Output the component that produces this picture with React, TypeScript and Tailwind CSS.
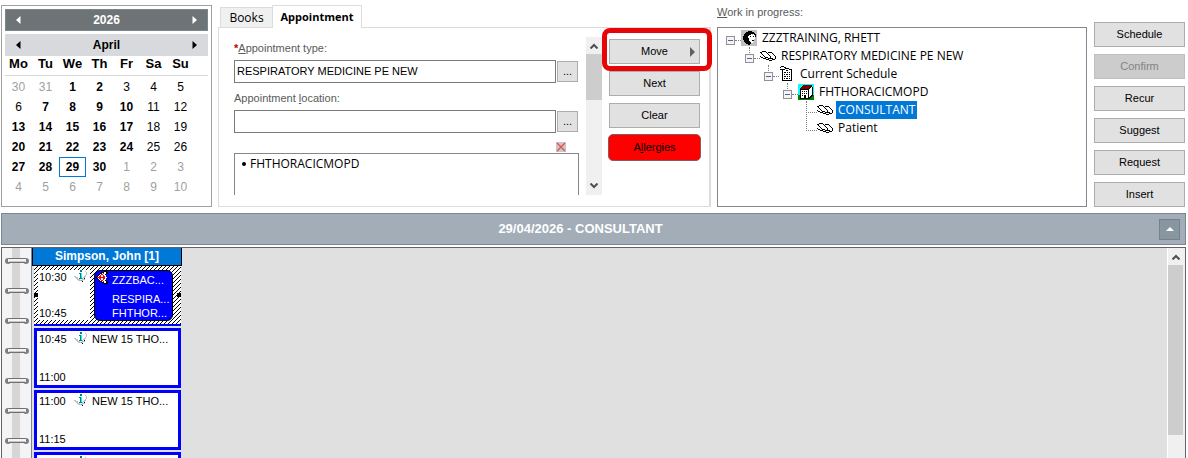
import React, { useState } from "react";

const WEEKDAYS = ["Mo", "Tu", "We", "Th", "Fr", "Sa", "Su"];

const WEEKS = [
  [30, 31, 1, 2, 3, 4, 5],
  [6, 7, 8, 9, 10, 11, 12],
  [13, 14, 15, 16, 17, 18, 19],
  [20, 21, 22, 23, 24, 25, 26],
  [27, 28, 29, 30, 1, 2, 3],
  [4, 5, 6, 7, 8, 9, 10],
];

const OPEN_DAYS = [1, 2, 7, 8, 9, 10, 13, 14, 15, 16, 17, 20, 21, 22, 23, 24, 27, 28, 29, 30];

const COLORS: Record<string, string> = {
  k: "#000000",
  w: "#ffffff",
  g: "#c0c0c0",
  d: "#808080",
  c: "#00ffff",
  t: "#008080",
  r: "#800000",
  R: "#ff0000",
  n: "#008000",
};

const PERSON = [
  "gggggggggggggggg",
  "gggggggkkkkggggg",
  "gggggkkkkkkkkggg",
  "ggggkkkkkkkkkkgg",
  "gggkkkkkkkwgwkkg",
  "gggkkkkkwwwwwwkg",
  "ggkkkkkwwkwwkwkg",
  "ggkkkkkwwwwwwwgg",
  "ggkkkkkkwwwwwwgg",
  "ggkkkkkkwwwwwggg",
  "gggkkkkkwwwkkggg",
  "gggkkkkkkwwwwggg",
  "ggggkkkkkkwwgggg",
  "gggggkkkkkgggggg",
  "gggggggkkggggggg",
  "gggggggggggggggg",
];

const BOOK = [
  "................",
  "................",
  "................",
  "..kkkk..........",
  "kkwwwwk.kkkk....",
  ".kwwwwwkwwwwk...",
  "..kwwwwwkwwwwk..",
  "...kwwwwwkwwwwk.",
  "k...kwwwwwkwwwwk",
  ".kk..kkkwwkwwwwk",
  "...kkk..kkkkkwwk",
  "......kkk...kkk.",
  ".........kkk....",
  "................",
  "................",
  "................",
];

const SCHEDULE = [
  "..kkk...........",
  ".k...kk.........",
  "......kkkk......",
  ".kkkkkwwwwkkk...",
  "...kwwwkkwwwk...",
  "...kwwwwwwwwk...",
  "...kwkkwkwkwk...",
  "...kwwwwwwwwk...",
  "...kwkwkkwkwk...",
  "...kwwwwwwwwk...",
  "...kwkkwkwkwk...",
  "...kwwwwwwwwk...",
  "...kwkwkkwkwk...",
  "...kwwwwwwwwk...",
  "...kkkkkkkkkk...",
  "................",
];

const BUILDING = [
  "cccccccccccccccc",
  "cccccrrrrrrrrrcc",
  "ccccrrrrrrrrrkcc",
  "cccrrrrrrrrrkwkc",
  "ccrrrrrrrrrkwwkc",
  "cckkkkkkkkkwwwkc",
  "cckwwwwwwwkwwwkc",
  "cckwkwkwkwkwwwkc",
  "cckwwwwwwwkwwwkc",
  "cckwkwkwkwkwwwkc",
  "cckwwwwwwwkwwwkc",
  "nnkwkwkkwwkwwkkn",
  "nnkwwwkkwwkwkknn",
  "nnkwwwkkwwkkknnn",
  "nnkkkkkkkkkknnnn",
  "nnnnnnnnnnnnnnnn",
];

const INFO = [
  "......tt......",
  "......tt...g..",
  "............g.",
  ".....ttc....g.",
  "......tc....g.",
  "......tc...g..",
  "gg....tc..gg..",
  ".ggg..tc.gg...",
  "..gg.tttc.k...",
  "...ggg..ggg...",
  "....gggdg.....",
  "........k.....",
];

const FAN = [
  "........kkk..",
  "......kkwwkk.",
  "....kkwRwwkk.",
  "...kwRRwwk...",
  "..kwRwwRww...",
  ".kwRRwwRRw...",
  "kRRRRRRRRww..",
  ".kwRRwwRRw.kk",
  "..kwRwwRww...",
  "...kwRRwwk...",
  "....kkwRwwkk.",
  "......kkwwkk.",
  "........kkkk.",
];

function PixelIcon({ rows }: { rows: string[] }) {
  return (
    <svg width={rows[0].length} height={rows.length} shapeRendering="crispEdges" className="shrink-0" aria-hidden="true">
      {rows.map((row, y) =>
        row.split("").map((c, x) => (c === "." ? null : <rect key={`${x}-${y}`} x={x} y={y} width="1" height="1" fill={COLORS[c]} />))
      )}
    </svg>
  );
}

function Arrow({ dir }: { dir: "left" | "right" }) {
  return (
    <svg width="5" height="8" viewBox="0 0 5 8" fill="currentColor" aria-hidden="true">
      {dir === "left" ? <path d="M4.5 0v8L0 4z" /> : <path d="M0.5 0v8L5 4z" />}
    </svg>
  );
}

function Chevron({ down }: { down?: boolean }) {
  return (
    <svg width="8" height="6" viewBox="0 0 8 6" fill="none" stroke="#505050" strokeWidth="2" aria-hidden="true">
      {down ? <path d="M0.5 0.5L4 4L7.5 0.5" /> : <path d="M0.5 5.5L4 2L7.5 5.5" />}
    </svg>
  );
}

function Calendar() {
  return (
    <div className="w-[211px] shrink-0 border border-[#a0a0a0] p-[3px] text-xs">
      <div className="flex h-[22px] items-center justify-between border border-[#7a8791] bg-[#6e7475] px-[10px] font-bold text-white">
        <button aria-label="Previous year"><Arrow dir="left" /></button>
        <span>2026</span>
        <button aria-label="Next year"><Arrow dir="right" /></button>
      </div>
      <div className="mt-[3px] flex h-[22px] items-center justify-between bg-[#d8d9dd] px-[11px] font-bold">
        <button aria-label="Previous month"><Arrow dir="left" /></button>
        <span>April</span>
        <button aria-label="Next month"><Arrow dir="right" /></button>
      </div>
      <div className="border-b border-[#d8d9dd]">
        <table className="table-fixed border-collapse">
          <thead>
            <tr>
              {WEEKDAYS.map((d) => (
                <th key={d} className="h-[19px] w-[27px] p-0 pb-1 text-[13px] leading-[14px]">{d}</th>
              ))}
            </tr>
          </thead>
        </table>
      </div>
      <table className="mt-[1px] table-fixed border-collapse">
        <tbody>
          {WEEKS.map((week, w) => (
            <tr key={w}>
              {week.map((day, i) => {
                const other = (w === 0 && day > 20) || (w > 3 && day < 20);
                const tone = other ? "text-[#a0a0a0]" : OPEN_DAYS.includes(day) ? "font-bold" : "";
                return (
                  <td key={i} className={`h-5 w-[27px] p-0 text-center leading-[18px] ${tone}`}>
                    {day === 29 ? <div className="border border-[#0078d7]">29</div> : day}
                  </td>
                );
              })}
            </tr>
          ))}
        </tbody>
      </table>
    </div>
  );
}

function PushButton({ label, disabled, children }: { label: string; disabled?: boolean; children?: React.ReactNode }) {
  return (
    <button
      disabled={disabled}
      className="relative h-[25px] w-[91px] shrink-0 border border-[#adadad] bg-[#e1e1e1] text-[11px] disabled:border-[#bfbfbf] disabled:bg-[#cccccc] disabled:text-[#838383]"
    >
      {label}
      {children}
    </button>
  );
}

function AppointmentPanel() {
  const [type, setType] = useState("RESPIRATORY MEDICINE PE NEW");
  const [location, setLocation] = useState("");

  return (
    <div className="flex w-[493px] shrink-0 flex-col">
      <div className="z-10 -mb-px flex items-end pl-[2px] font-['Open_Sans',sans-serif]">
        <button className="h-[21px] w-[52px] border border-r-0 border-[#dcdcdc] bg-[#f0f0f0] text-xs">Books</button>
        <button className="h-[23px] w-[90px] border border-b-0 border-[#dcdcdc] bg-white text-[11px] font-bold">Appointment</button>
      </div>
      <div className="flex h-[180px] border border-r-2 border-[#dcdcdc] pt-[9px]">
        <div className="flex h-[158px] flex-1 flex-col overflow-hidden pl-[15px] text-[11px]">
          <label htmlFor="type" className="h-[23px] shrink-0 pt-[3px] text-[#5a5a5a]">
            <span className="font-bold text-[#c00000]">*</span><u>A</u>ppointment type:
          </label>
          <div className="flex shrink-0 gap-px pr-px">
            <input id="type" value={type} onChange={(e) => setType(e.target.value)} className="h-[23px] min-w-0 flex-1 border border-[#7a7a7a] px-[2px] pb-[2px]" />
            <button className="mt-px h-[21px] w-[21px] border border-[#adadad] bg-[#e1e1e1]" aria-label="Find type">...</button>
          </div>
          <label htmlFor="location" className="h-[27px] shrink-0 pt-[7px] text-[#5a5a5a]">Appointment <u>l</u>ocation:</label>
          <div className="flex shrink-0 gap-px pr-px">
            <input id="location" value={location} onChange={(e) => setLocation(e.target.value)} className="h-[23px] min-w-0 flex-1 border border-[#7a7a7a] px-[2px] pb-[2px]" />
            <button className="mt-px h-[21px] w-[21px] border border-[#adadad] bg-[#e1e1e1]" aria-label="Find location">...</button>
          </div>
          <div className="flex h-5 shrink-0 items-end justify-end pr-[13px] pb-px">
            <button aria-label="Remove" className="bg-[#c8c8c8]">
              <svg width="10" height="10" stroke="#e85050" strokeWidth="1.3"><path d="M1 1L9 9M9 1L1 9" /></svg>
            </button>
          </div>
          <ul className="h-[60px] shrink-0 border border-[#828790] px-[7px] pt-[2px] font-['Open_Sans',sans-serif] text-xs">
            <li className="flex items-center gap-1"><span className="h-1 w-1 rounded-full bg-black" />FHTHORACICMOPD</li>
          </ul>
        </div>
        <div className="ml-[7px] flex h-[158px] w-4 flex-col items-center justify-between bg-[#f0f0f0] py-[6px]">
          <Chevron />
          <div className="mt-[5px] mb-auto h-[46px] w-full bg-[#cdcdcd]" />
          <Chevron down />
        </div>
        <div className="ml-[7px] flex w-[100px] flex-col gap-[7px] pt-px">
          <div className="relative">
            <PushButton label="Move">
              <svg width="5" height="10" className="absolute top-[7px] right-1" fill="#606060"><path d="M0 0v10l5-5z" /></svg>
            </PushButton>
            <div className="pointer-events-none absolute -top-[10px] -left-[7px] h-[43px] w-[110px] rounded-lg border-[5px] border-[#e80507]" />
          </div>
          <PushButton label="Next" />
          <PushButton label="Clear" />
          <button className="-mx-px -mt-px h-[27px] w-[93px] rounded-[5px] border border-[#8a5a5a] bg-[#ff0000] text-[11px]">A<u>l</u>lergies</button>
        </div>
      </div>
    </div>
  );
}

function Expander() {
  return (
    <svg width="9" height="9" shapeRendering="crispEdges" className="mt-1 shrink-0" aria-hidden="true">
      <rect width="9" height="9" fill="#919191" />
      <rect x="1" y="1" width="7" height="7" fill="#f4f4f4" />
      <rect x="2" y="4" width="5" height="1" fill="#4b63a7" />
    </svg>
  );
}

function TreeRow({ label, icon, pad, leaf, selected }: { label: string; icon: string[]; pad: string; leaf?: boolean; selected?: boolean }) {
  return (
    <li className={`flex h-[18px] items-center ${pad}`}>
      {leaf ? <span className="mt-1 w-[11px] border-t border-dotted border-[#808080]" /> : (
        <>
          <Expander />
          <span className="mt-1 w-[6px] border-t border-dotted border-[#808080]" />
        </>
      )}
      <PixelIcon rows={icon} />
      <span className={`ml-[3px] h-[18px] px-[2px] leading-[17px] ${selected ? "bg-[#0078d7] text-white" : ""}`}>{label}</span>
    </li>
  );
}

function WorkInProgress() {
  return (
    <div className="flex min-w-0 flex-1 flex-col">
      <h2 className="h-[22px] text-[11px] leading-[14px] text-[#5a5a5a]"><u>W</u>ork in progress:</h2>
      <ul className="relative h-[180px] border border-[#828790] pt-px font-['Open_Sans',sans-serif] text-xs">
        <TreeRow label="ZZZTRAINING, RHETT" icon={PERSON} pad="pl-2" />
        <TreeRow label="RESPIRATORY MEDICINE PE NEW" icon={BOOK} pad="pl-[27px]" />
        <TreeRow label="Current Schedule" icon={SCHEDULE} pad="pl-[46px]" />
        <TreeRow label="FHTHORACICMOPD" icon={BUILDING} pad="pl-[65px]" />
        <TreeRow label="CONSULTANT" icon={BOOK} pad="pl-[88px]" leaf selected />
        <TreeRow label="Patient" icon={BOOK} pad="pl-[88px]" leaf />
        {/* connector lines between levels */}
        <li aria-hidden="true" className="absolute top-[19px] left-[31px] h-[6px] border-l border-dotted border-[#808080]" />
        <li aria-hidden="true" className="absolute top-[37px] left-[50px] h-[6px] border-l border-dotted border-[#808080]" />
        <li aria-hidden="true" className="absolute top-[55px] left-[69px] h-[6px] border-l border-dotted border-[#808080]" />
        <li aria-hidden="true" className="absolute top-[73px] left-[88px] h-7 border-l border-dotted border-[#808080]" />
      </ul>
    </div>
  );
}

function Ring() {
  return (
    <svg width="24" height="8" className="shrink-0" aria-hidden="true">
      <rect x="0" y="1" width="6" height="6" rx="3" fill="#808080" />
      <rect x="18" y="1" width="6" height="6" rx="3" fill="#808080" />
      <rect x="2.5" y="1.5" width="19" height="4" rx="1" fill="#f4f4f4" stroke="#707070" />
      <rect x="4" y="4" width="16" height="1" fill="#c8c8c8" />
    </svg>
  );
}

function Slot({ from, to, title }: { from?: string; to?: string; title?: string }) {
  return (
    <div className="flex h-[60px] shrink-0 flex-col justify-between border-[3px] border-[#0000ff] bg-white px-[2px] text-[11px] leading-[14px]">
      <div className="flex pt-px">
        <span className="w-[35px] shrink-0">{from}</span>
        <PixelIcon rows={INFO} />
        <span className="ml-1 whitespace-nowrap">{title}</span>
      </div>
      <span className="pb-px">{to}</span>
    </div>
  );
}

function Hatch() {
  return (
    <svg width="100%" height="100%" shapeRendering="crispEdges" className="absolute inset-0" aria-hidden="true">
      <pattern id="hatch" width="4" height="4" patternUnits="userSpaceOnUse">
        <rect width="4" height="4" fill="#fff" />
        <path d="M3 0h1v1h-1zM2 1h1v1h-1zM1 2h1v1h-1zM0 3h1v1h-1z" fill="#000" />
      </pattern>
      <rect width="100%" height="100%" fill="url(#hatch)" />
    </svg>
  );
}

function DayColumn() {
  return (
    <div className="w-[150px] shrink-0">
      <div className="h-[18px] border border-t-0 border-black bg-[#0078d7] text-center text-xs leading-[17px] font-bold text-white">Simpson, John [1]</div>
      <div className="flex flex-col gap-[2px] bg-[#e0e0e0] pr-px pl-[2px]">
        <div className="border-b-2 border-[#0000ff]">
          <div className="relative flex h-[58px] p-1 text-[11px] leading-[14px]">
            <Hatch />
            <div className="relative mr-1 flex flex-1 flex-col justify-between bg-white pl-px">
              <div className="flex">
                <span className="w-[35px] shrink-0">10:30</span>
                <PixelIcon rows={INFO} />
              </div>
              <span>10:45</span>
            </div>
            <div className="relative mr-1 flex h-[51px] w-[79px] flex-col justify-between rounded-md border border-black bg-[#0000ff] pl-[17px] whitespace-nowrap text-white">
              <span className="absolute top-0 left-px"><PixelIcon rows={FAN} /></span>
              <span className="pt-[2px]">ZZZBAC...</span>
              <span className="pt-1">RESPIRA...</span>
              <span>FHTHOR...</span>
            </div>
            <span className="absolute top-[27px] left-0 h-1 w-1 bg-black" />
            <span className="absolute top-[27px] right-0 h-1 w-1 bg-black" />
          </div>
        </div>
        <Slot from="10:45" to="11:00" title="NEW 15 THO..." />
        <Slot from="11:00" to="11:15" title="NEW 15 THO..." />
        <Slot />
      </div>
    </div>
  );
}

export default function App() {
  return (
    <div className="flex h-screen flex-col overflow-hidden bg-white pr-[2px] pl-px font-['Liberation_Sans',Arial,sans-serif] text-black">
      <div className="flex shrink-0 pt-[5px]">
        <Calendar />
        <div className="w-[6px] shrink-0" />
        <AppointmentPanel />
        <div className="w-[6px] shrink-0" />
        <WorkInProgress />
        <div className="ml-[7px] flex flex-col gap-[7px] pt-[17px] pr-px">
          <PushButton label="Schedule" />
          <PushButton label="Confirm" disabled />
          <PushButton label="Recur" />
          <PushButton label="Suggest" />
          <PushButton label="Request" />
          <PushButton label="Insert" />
        </div>
      </div>

      <div className="mt-[6px] flex h-8 shrink-0 items-center border border-[#7b8894] bg-[#a2adb7] pr-[5px]">
        <h1 className="flex-1 text-center text-[13px] font-bold text-white">29/04/2026 - CONSULTANT</h1>
        <button aria-label="Collapse" className="flex h-[21px] w-[21px] items-center justify-center border border-[#748290] bg-[#8896a0]">
          <svg width="8" height="4" fill="#fff"><path d="M0 4L4 0L8 4z" /></svg>
        </button>
      </div>

      <div className="mt-[2px] flex min-h-0 flex-1 overflow-hidden border border-b-0 border-[#646464] bg-[#e0e0e0]">
        <div className="flex w-[30px] shrink-0 flex-col items-center gap-[22px] border-r border-[#7b8894] bg-[linear-gradient(to_right,#f4f4f4_0_10px,#d6d6d6_10px_18px,#f4f4f4_18px)] pt-[9px]">
          {[0, 1, 2, 3, 4, 5, 6].map((n) => (
            <Ring key={n} />
          ))}
        </div>
        <DayColumn />
        <div className="ml-auto flex w-[18px] flex-col items-center border-r-2 border-l border-r-[#f0f0f0] border-l-white bg-[#f0f0f0] pt-[6px]">
          <Chevron />
          <div className="mt-[5px] h-[170px] w-full bg-[#cdcdcd]" />
        </div>
      </div>
    </div>
  );
}
